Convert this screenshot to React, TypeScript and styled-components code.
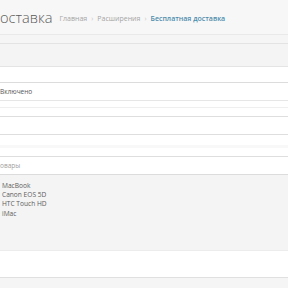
import React from "react"
import styled, { createGlobalStyle } from "styled-components"

const GlobalStyle = createGlobalStyle`
  html, body {
    margin: 0;
    padding: 0;
    background: #f5f5f5;
    font-family: "Open Sans", "Liberation Sans", sans-serif;
  }
`

const Page = styled.div`
  width: 288px;
  height: 288px;
  overflow: hidden;
  background: #f5f5f5;
`

const Header = styled.div`
  height: 34px;
  display: flex;
  align-items: center;
  gap: 7px;
  background: #f7f7f7;
  border-bottom: 1px solid #e9e9e9;
`

const Title = styled.h1`
  margin: 0;
  margin-top: -1px;
  font-size: 14.6px;
  font-weight: 300;
  color: #5a5a5a;
`

const Crumbs = styled.div`
  display: flex;
  align-items: center;
  margin-top: 2px;
  font-size: 7px;
  color: #a5a5a5;
`

const Crumb = styled.span<{ $active?: boolean }>`
  color: ${(p) => (p.$active ? "#4d8cad" : "#a5a5a5")};
  font-weight: ${(p) => (p.$active ? 600 : 400)};
`

const Sep = styled.span`
  margin: 0 4px;
  color: #c8c8c8;
`

const Panel = styled.div`
  margin-top: 8px;
  border-top: 1px solid #e3e3e3;
  background: #fff;
`

const PanelHeading = styled.div`
  height: 22px;
  background: #f4f4f4;
  border-bottom: 1px solid #e4e4e4;
`

const Row = styled.div<{ $h: number; $line?: string; $bg?: string }>`
  height: ${(p) => p.$h}px;
  display: flex;
  align-items: center;
  background: ${(p) => p.$bg || "#fff"};
  border-bottom: 1px solid ${(p) => p.$line || "#dedede"};
  font-size: 6.5px;
  color: #555;
`

const Placeholder = styled.span`
  color: #a0a0a0;
`

const Band = styled.div`
  height: 3px;
  width: 100%;
  margin-top: 2px;
  background: #f8f8f8;
`

const ProductBox = styled.div`
  height: 76px;
  background: #f4f4f4;
  border-bottom: 1px solid #ececec;
  padding: 6px 0 0 2px;
  box-sizing: border-box;
`

const Product = styled.div`
  font-size: 6.6px;
  line-height: 9.2px;
  color: #5c5c5c;
`

const products = ["MacBook", "Canon EOS 5D", "HTC Touch HD", "iMac"]

export default function App() {
  return (
    <>
      <GlobalStyle />
      <Page>
        <Header>
          <Title>оставка</Title>
          <Crumbs>
            <Crumb>Главная</Crumb>
            <Sep>›</Sep>
            <Crumb>Расширения</Crumb>
            <Sep>›</Sep>
            <Crumb $active>Бесплатная доставка</Crumb>
          </Crumbs>
        </Header>
        <Panel>
          <PanelHeading />
          <Row $h={15} $line="#dcdcdc" />
          <Row $h={17} $line="#e6e6e6">Включено</Row>
          <Row $h={6} $line="#efefef" />
          <Row $h={8} $line="#dedede" />
          <Row $h={17} $line="#dedede" />
          <Row $h={21} $line="#dedede">
            <Band />
          </Row>
          <Row $h={17} $line="#dcdcdc">
            <Placeholder>овары</Placeholder>
          </Row>
          <ProductBox>
            {products.map((p) => (
              <Product key={p}>{p}</Product>
            ))}
          </ProductBox>
          <Row $h={26} $line="#e0e0e0" />
        </Panel>
      </Page>
    </>
  )
}
